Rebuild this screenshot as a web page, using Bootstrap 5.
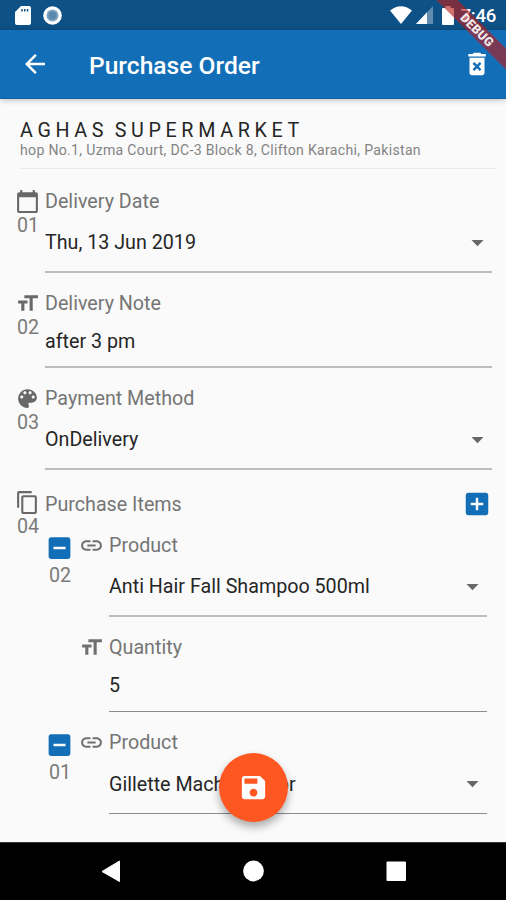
<!DOCTYPE html>
<html lang="en">
<head>
<meta charset="utf-8">
<meta name="viewport" content="width=device-width, initial-scale=1">
<title>Purchase Order</title>
<link href="https://cdn.jsdelivr.net/npm/bootstrap@5.3.0/dist/css/bootstrap.min.css" rel="stylesheet">
<style>
body{font-family:Roboto,"Liberation Sans",sans-serif;background:#fafafa;color:#262626;font-size:19.7px;line-height:24px;width:506px;height:900px;overflow:hidden}
svg{display:block;fill:currentColor;flex:none}
.status{height:30px;background:#0e5186;padding:0 10px 0 15px}
.clock{font-size:18.6px;font-weight:500;letter-spacing:-.3px;padding-top:2px;margin-left:7px}
.sync{margin-left:12px}
.battery{margin-left:9px}
.appbar{height:69px;background:#126eb6;border-bottom:1px solid #1264a6;padding:0 14px 0 20px;box-shadow:0 1px 6px rgba(0,0,0,.25);z-index:1}
.app-title{font-size:24.6px;font-weight:500;margin-left:39px;padding-top:3px}
.page{padding:0 14px 0 15px}
.shop{margin:18px -4px 0 5px;height:52px;border-bottom:1px solid #ececec}
.shop-name{font-size:19.7px;letter-spacing:4.650px;word-spacing:-3px;line-height:26px;padding-top:1px;margin-bottom:-1px}
.shop-addr{font-size:14.1px;line-height:15px;color:#848484;letter-spacing:.3px}
.gut{width:30px;flex:none;color:#777}
.gut svg{color:#686868}
.num{font-size:19.7px;color:#7b7b7b;line-height:24px;padding:1px 0 0 2px;margin-bottom:-1px}
.icon-box{height:24px;display:flex;align-items:center}
.lbl{color:#757575;padding-top:1px;margin-bottom:-1px}
.glyph{color:#707070}
.val{border-bottom:2px solid #bdbdbd;display:flex;justify-content:space-between;align-items:center}
.val span{padding-top:2px}
.select-val{height:60px;margin-bottom:18px}
.input-val{height:53px;margin-bottom:18px}
.arrow{color:#686868}
.thin{border-bottom:1px solid #8d8d8d}
.blue{color:#126eb6}
.items-head .gut{padding-top:20px}
.items-title{padding-top:22px}
.plus{margin-top:-3px}
.minus-col{width:34px;flex:none}
.minus-col .num{padding-left:4px}
.link-col{width:30px;flex:none}
.nested{margin:-5px 5px 0 30px}
.fab{left:219px;top:753px;width:69px;height:69px;background:#ff5722;box-shadow:0 5px 8px rgba(0,0,0,.32)}
.sysnav{left:0;top:842px;width:506px;height:58px;background:#000;border-top:1px solid #333;z-index:2}
.corner{top:0;right:0;width:80px;height:80px;z-index:3}
</style>
<script src="https://cdn.jsdelivr.net/npm/bootstrap@5.3.0/dist/js/bootstrap.bundle.min.js"></script>
</head>
<body class="position-relative">
<svg class="d-none">
<symbol id="i-size" viewBox="0 0 24 24"><path d="M9 4v3h5v12h3V7h5V4H9zm-6 8h3v7h3v-7h3V9H3v3z"/></symbol>
<symbol id="i-link" viewBox="0 0 24 24"><path d="M3.900 12c0-1.710 1.390-3.100 3.100-3.100h4V7H7c-2.760 0-5 2.240-5 5s2.240 5 5 5h4v-1.900H7c-1.710 0-3.100-1.390-3.100-3.100zM8 13h8v-2H8v2zm9-6h-4v1.900h4c1.710 0 3.100 1.390 3.100 3.100s-1.390 3.100-3.100 3.100h-4V17h4c2.760 0 5-2.240 5-5s-2.240-5-5-5z"/></symbol>
<symbol id="i-minus" viewBox="0 0 24 24"><path d="M19 3H5c-1.110 0-2 .9-2 2v14c0 1.100.890 2 2 2h14c1.100 0 2-.9 2-2V5c0-1.100-.9-2-2-2zm-2 10H7v-2h10v2z"/></symbol>
<symbol id="i-down" viewBox="0 0 24 24"><path d="M7 10l5 5 5-5z"/></symbol>
</svg>

<div class="status d-flex align-items-center text-white">
  <svg width="16" height="19" viewBox="0 0 16 19"><path fill-rule="evenodd" d="M6 0h8a2 2 0 0 1 2 2v15a2 2 0 0 1-2 2H2a2 2 0 0 1-2-2V6zM6.200 3v2.500h1.500V3zM9 3v2.500h1.500V3zM11.800 3v2.500h1.500V3z"/></svg>
  <svg class="sync me-auto" width="19" height="19" viewBox="0 0 19 19"><circle cx="9.500" cy="9.500" r="9.300"/><circle cx="9.500" cy="9.500" r="6" fill="#7fa3c0"/><circle cx="9.500" cy="9.500" r="4" fill="#5b88ac"/></svg>
  <svg width="22" height="18" viewBox="0 0 22 18"><path d="M0 4.500Q11-4 22 4.500L11 18z"/></svg>
  <svg class="ms-1" width="17" height="18" viewBox="0 0 17 18"><path d="M17 0v18H0z" opacity=".35"/><path d="M11 6.300V18H0z"/></svg>
  <svg class="battery" width="12" height="19" viewBox="0 0 12 19"><path d="M3.500 0h5v2H11a1 1 0 0 1 1 1v15a1 1 0 0 1-1 1H1a1 1 0 0 1-1-1V3a1 1 0 0 1 1-1h2.500z"/></svg>
  <span class="clock">7:46</span>
</div>

<nav class="appbar d-flex align-items-center text-white position-relative">
  <svg width="30" height="30" viewBox="0 0 24 24"><path d="M20 11H7.830l5.590-5.590L12 4l-8 8 8 8 1.410-1.410L7.830 13H20v-2z"/></svg>
  <span class="app-title me-auto">Purchase Order</span>
  <svg width="30" height="30" viewBox="0 0 24 24"><path d="M6 19c0 1.100.9 2 2 2h8c1.100 0 2-.9 2-2V7H6v12zm2.460-7.120l1.410-1.410L12 12.590l2.120-2.120 1.410 1.410L13.410 14l2.120 2.120-1.410 1.410L12 15.410l-2.120 2.120-1.410-1.410L10.590 14l-2.130-2.120zM15.500 4l-1-1h-5l-1 1H5v2h14V4z"/></svg>
</nav>

<main class="page d-flow-root pt-0">
  <header class="shop d-flex flex-column">
    <div class="shop-name text-nowrap">AGHAS SUPERMARKET</div>
    <div class="shop-addr text-nowrap">hop No.1, Uzma Court, DC-3 Block 8, Clifton Karachi, Pakistan</div>
  </header>

  <section class="d-flex pt-1 mt-3">
    <div class="gut"><div class="icon-box"><svg width="25" height="25" viewBox="0 0 24 24"><path d="M20 3h-1V1h-2v2H7V1H5v2H4c-1.100 0-2 .9-2 2v16c0 1.100.9 2 2 2h16c1.100 0 2-.9 2-2V5c0-1.100-.9-2-2-2zm0 18H4V8h16v13z"/></svg></div><div class="num">01</div></div>
    <div class="flex-grow-1"><div class="lbl">Delivery Date</div><div class="val select-val"><span>Thu, 13 Jun 2019</span><svg class="arrow" width="29" height="29"><use href="#i-down"/></svg></div></div>
  </section>
  <section class="d-flex">
    <div class="gut"><div class="icon-box"><svg width="25" height="25"><use href="#i-size"/></svg></div><div class="num">02</div></div>
    <div class="flex-grow-1"><div class="lbl">Delivery Note</div><div class="val input-val"><span>after 3 pm</span></div></div>
  </section>
  <section class="d-flex">
    <div class="gut"><div class="icon-box"><svg width="25" height="25" viewBox="0 0 24 24"><path d="M12 3c-4.970 0-9 4.030-9 9s4.030 9 9 9c.83 0 1.500-.67 1.500-1.500 0-.39-.15-.74-.39-1.010-.23-.26-.38-.61-.38-.99 0-.83.67-1.500 1.500-1.500H16c2.760 0 5-2.240 5-5 0-4.420-4.030-8-9-8zm-5.500 9c-.83 0-1.500-.67-1.500-1.500S5.670 9 6.500 9 8 9.670 8 10.500 7.330 12 6.500 12zm3-4C8.670 8 8 7.330 8 6.500S8.670 5 9.500 5s1.500.67 1.500 1.500S10.330 8 9.500 8zm5 0c-.83 0-1.500-.67-1.500-1.500S13.670 5 14.500 5s1.500.67 1.500 1.500S15.330 8 14.500 8zm3 4c-.83 0-1.500-.67-1.500-1.500S16.670 9 17.500 9s1.500.67 1.500 1.500-.67 1.500-1.500 1.500z"/></svg></div><div class="num">03</div></div>
    <div class="flex-grow-1"><div class="lbl">Payment Method</div><div class="val select-val mb-0"><span>OnDelivery</span><svg class="arrow" width="29" height="29"><use href="#i-down"/></svg></div></div>
  </section>
  <section class="d-flex items-head">
    <div class="gut"><div class="icon-box"><svg width="25" height="25" viewBox="0 0 24 24"><path d="M16 1H4c-1.100 0-2 .9-2 2v14h2V3h12V1zm3 4H8c-1.100 0-2 .9-2 2v14c0 1.100.9 2 2 2h11c1.100 0 2-.9 2-2V7c0-1.100-.9-2-2-2zm0 16H8V7h11v14z"/></svg></div><div class="num">04</div></div>
    <div class="flex-grow-1 d-flex justify-content-between items-title"><div class="lbl">Purchase Items</div><svg class="blue plus" width="30" height="30" viewBox="0 0 24 24"><path d="M19 3H5c-1.110 0-2 .9-2 2v14c0 1.100.890 2 2 2h14c1.100 0 2-.9 2-2V5c0-1.100-.9-2-2-2zm-2 10h-4v4h-2v-4H7v-2h4V7h2v4h4v2z"/></svg></div>
  </section>
  <div class="nested">
    <section class="d-flex">
      <div class="minus-col"><svg class="blue" width="29" height="30"><use href="#i-minus"/></svg><div class="num">02</div></div>
      <div class="link-col"><div class="icon-box"><svg class="glyph" width="25" height="25"><use href="#i-link"/></svg></div></div>
      <div class="flex-grow-1"><div class="lbl">Product</div><div class="val select-val"><span>Anti Hair Fall Shampoo 500ml</span><svg class="arrow" width="29" height="29"><use href="#i-down"/></svg></div></div>
    </section>
    <section class="d-flex">
      <div class="minus-col"></div>
      <div class="link-col"><div class="icon-box"><svg class="glyph" width="25" height="25"><use href="#i-size"/></svg></div></div>
      <div class="flex-grow-1"><div class="lbl">Quantity</div><div class="val input-val thin"><span>5</span></div></div>
    </section>
    <section class="d-flex">
      <div class="minus-col"><svg class="blue" width="29" height="30"><use href="#i-minus"/></svg><div class="num">01</div></div>
      <div class="link-col"><div class="icon-box"><svg class="glyph" width="25" height="25"><use href="#i-link"/></svg></div></div>
      <div class="flex-grow-1"><div class="lbl">Product</div><div class="val select-val thin"><span>Gillette Mach 3 Razor</span><svg class="arrow" width="29" height="29"><use href="#i-down"/></svg></div></div>
    </section>
  </div>
</main>

<button class="fab position-absolute rounded-circle border-0 p-0 text-white d-flex align-items-center justify-content-center" aria-label="Save"><svg width="31" height="31" viewBox="0 0 24 24"><path d="M17 3H5c-1.110 0-2 .9-2 2v14c0 1.100.890 2 2 2h14c1.100 0 2-.9 2-2V7l-4-4zm-5 16c-1.660 0-3-1.340-3-3s1.340-3 3-3 3 1.340 3 3-1.340 3-3 3zm3-10H5V5h10v4z"/></svg></button>

<footer class="sysnav position-absolute text-white">
  <svg width="506" height="57" viewBox="0 0 506 57"><path d="M119.500 18v20.500L102 28.500z" stroke="#fff" stroke-linejoin="round"/><circle cx="253.500" cy="28" r="10.400"/><rect x="386.500" y="18.500" width="19.500" height="19.500" rx="1"/></svg>
</footer>

<svg class="corner position-absolute" viewBox="0 0 80 80"><g transform="translate(51 30) rotate(45)"><rect x="-70" y="-7.500" width="140" height="15" fill="#b71c1c" fill-opacity=".63"/><text y="4.300" text-anchor="middle" font-size="12.500" font-weight="900" fill="#f3e9ec" textLength="41">DEBUG</text></g></svg>
</body>
</html>
